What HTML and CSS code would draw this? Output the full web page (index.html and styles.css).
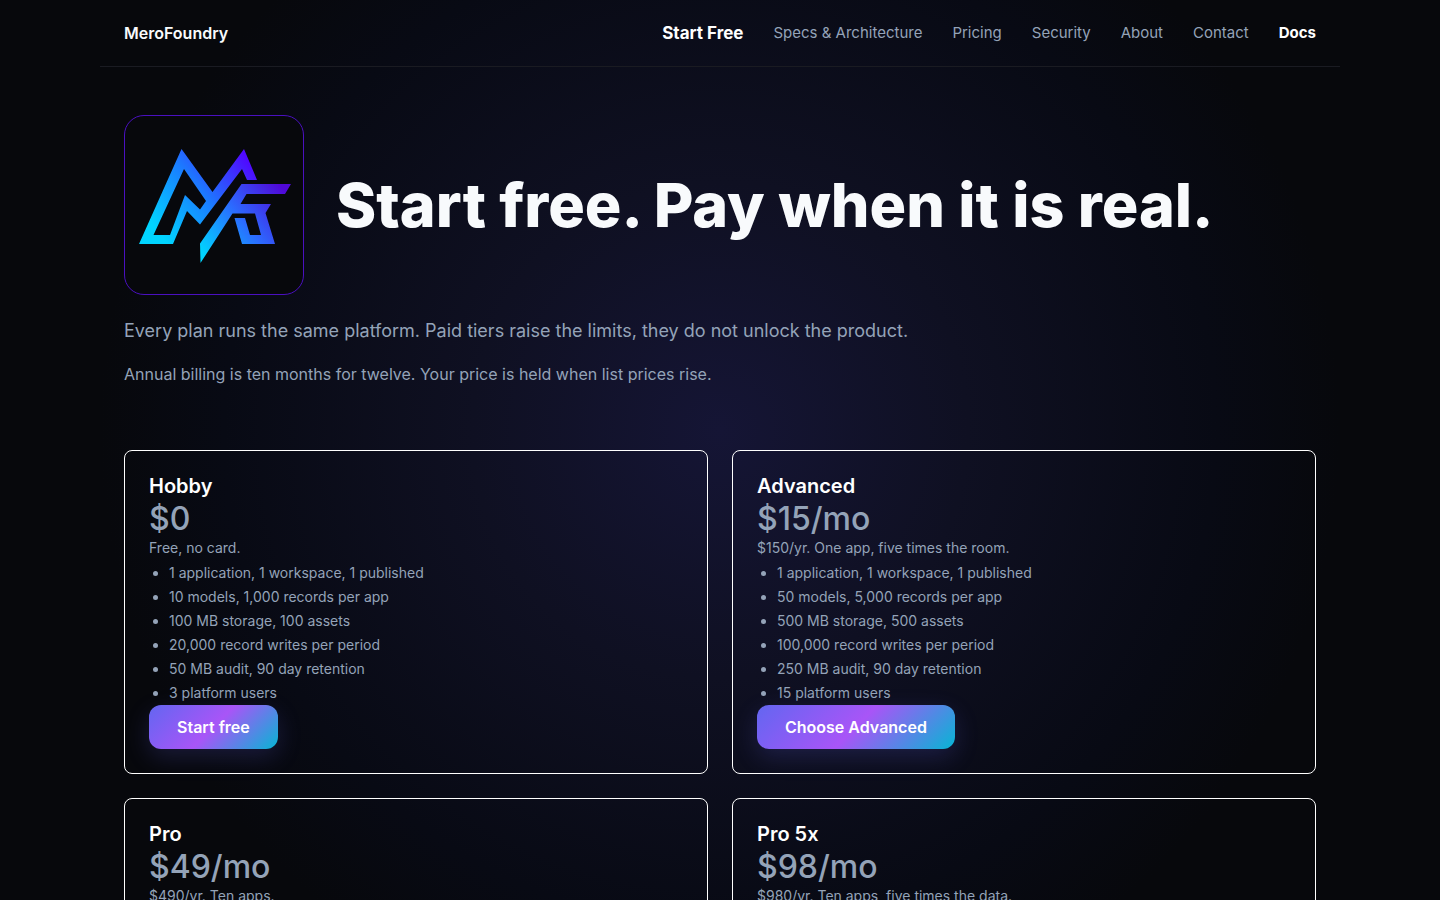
FILE: index.html
```
<!DOCTYPE html>
<html lang="en">
<head>
  <meta charset="UTF-8">
  <meta name="viewport" content="width=device-width, initial-scale=1.0">
  <title>Pricing - MeroFoundry</title>
  <link rel="stylesheet" href="styles.css">
</head>
<body>

  <header class="site-header">
    <a class="brand" href="#">MeroFoundry</a>
    <nav class="site-nav">
      <a class="nav-cta" href="#">Start Free</a>
      <a href="#">Specs &amp; Architecture</a>
      <a href="#">Pricing</a>
      <a href="#">Security</a>
      <a href="#">About</a>
      <a href="#">Contact</a>
      <a class="nav-docs" href="#">Docs</a>
    </nav>
  </header>

  <main>
    <section class="hero">
      <div class="hero-top">
        <svg class="hero-logo" viewBox="1 1 178 178" role="img" aria-label="MeroFoundry logo">
          <defs>
            <linearGradient id="mark" gradientUnits="userSpaceOnUse" x1="38" y1="122" x2="128" y2="50">
              <stop offset="0" stop-color="#00d4ff"/>
              <stop offset="0.5" stop-color="#1a7dff"/>
              <stop offset="1" stop-color="#5008ff"/>
            </linearGradient>
            <linearGradient id="mark-f" gradientUnits="userSpaceOnUse" x1="74" y1="132" x2="154" y2="68">
              <stop offset="0" stop-color="#00d4ff"/>
              <stop offset="0.5" stop-color="#2b6bff"/>
              <stop offset="1" stop-color="#5008d8"/>
            </linearGradient>
          </defs>
          <path fill="url(#mark)" fill-rule="evenodd" d="M15 129 L57.500 34 L88.500 77 L120 34 L133 65 L123 65 L118 54 L76 109.500 L63 96 L49 129 Z M29.500 120 L46 120 L61 80 L76 94.500 L82 86 L60 54 Z"/>
          <path fill="url(#mark-f)" d="M76 128.500 L117.500 69 L167 69 L161 79 L122.500 79 L116.500 89 L147 89 L141.500 98 L151 129 L118 129 L110.500 103 L121 103 L126 120 L137 120 L131 98.500 L108.500 98.500 L76.500 148 Z"/>
        </svg>
        <h1>Start free. Pay when it is real.</h1>
      </div>
      <p class="lead">Every plan runs the same platform. Paid tiers raise the limits, they do not unlock the product.</p>
      <p class="note">Annual billing is ten months for twelve. Your price is held when list prices rise.</p>
    </section>

    <section class="plans">
      <article class="plan-card">
        <h2>Hobby</h2>
        <p class="price">$0</p>
        <p class="terms">Free, no card.</p>
        <ul>
          <li>1 application, 1 workspace, 1 published</li>
          <li>10 models, 1,000 records per app</li>
          <li>100 MB storage, 100 assets</li>
          <li>20,000 record writes per period</li>
          <li>50 MB audit, 90 day retention</li>
          <li>3 platform users</li>
        </ul>
        <a class="btn" href="#">Start free</a>
      </article>

      <article class="plan-card">
        <h2>Advanced</h2>
        <p class="price">$15/mo</p>
        <p class="terms">$150/yr. One app, five times the room.</p>
        <ul>
          <li>1 application, 1 workspace, 1 published</li>
          <li>50 models, 5,000 records per app</li>
          <li>500 MB storage, 500 assets</li>
          <li>100,000 record writes per period</li>
          <li>250 MB audit, 90 day retention</li>
          <li>15 platform users</li>
        </ul>
        <a class="btn" href="#">Choose Advanced</a>
      </article>

      <article class="plan-card">
        <h2>Pro</h2>
        <p class="price">$49/mo</p>
        <p class="terms">$490/yr. Ten apps.</p>
      </article>

      <article class="plan-card">
        <h2>Pro 5x</h2>
        <p class="price">$98/mo</p>
        <p class="terms">$980/yr. Ten apps, five times the data.</p>
      </article>
    </section>
  </main>

</body>
</html>
```
FILE: styles.css
```
* {
  box-sizing: border-box;
  margin: 0;
  padding: 0;
}

body {
  min-height: 100vh;
  background: #07080c radial-gradient(circle 620px at 50% 430px, #151535, #0f1022 40%, #080a14 80%, #07080c) no-repeat;
  color: #94a3b8;
  font-family: Inter, sans-serif;
  font-size: 16px;
  line-height: 24px;
}

a {
  color: inherit;
  text-decoration: none;
}

.site-header {
  display: flex;
  justify-content: space-between;
  align-items: center;
  max-width: 1240px;
  height: 67px;
  margin: 0 auto;
  padding: 0 24px;
  border-bottom: 1px solid #1a1b22;
}

.brand {
  color: #f8fafc;
  font-size: 16px;
  font-weight: 600;
}

.site-nav {
  display: flex;
  align-items: center;
  gap: 30px;
  font-size: 15px;
}

.nav-cta,
.nav-docs {
  color: #fff;
  font-weight: 700;
}

.nav-cta {
  font-size: 17px;
}

main {
  max-width: 1240px;
  margin: 0 auto;
  padding: 48px 24px;
}

.hero {
  margin-bottom: 64px;
}

.hero-top {
  display: flex;
  align-items: center;
  gap: 32px;
  margin-bottom: 20px;
}

.hero-logo {
  flex: none;
  width: 180px;
  height: 180px;
  border: 1px solid #4a10c0;
  border-radius: 20px;
  background: #07080c;
}

h1 {
  color: #f8fafc;
  font-size: 61px;
  font-weight: 800;
  line-height: 72px;
}

.lead {
  margin-bottom: 15px;
  font-size: 18px;
  line-height: 32px;
}

.plans {
  display: grid;
  grid-template-columns: repeat(2, 1fr);
  gap: 24px;
}

.plan-card {
  padding: 24px;
  border: 1px solid #fff;
  border-radius: 8px;
  font-size: 14px;
}

.plan-card h2 {
  margin-bottom: 2px;
  color: #fff;
  font-size: 20px;
  font-weight: 600;
  line-height: 22px;
}

.price {
  font-size: 32px;
  font-weight: 500;
  line-height: 40px;
}

.terms {
  margin-bottom: 4px;
  line-height: 18px;
}

.plan-card ul {
  padding-left: 20px;
}

.btn {
  display: inline-block;
  padding: 10px 28px;
  border-radius: 12px;
  background: linear-gradient(135deg, #6366f1, #a855f7 50%, #06b6d4);
  box-shadow: 0 8px 24px rgba(99, 102, 241, 0.2);
  color: #fff;
  font-size: 16px;
  font-weight: 600;
}

@media (max-width: 800px) {
  .site-header,
  .site-nav,
  .hero-top {
    flex-wrap: wrap;
    height: auto;
  }

  .plans {
    grid-template-columns: 1fr;
  }
}
```
